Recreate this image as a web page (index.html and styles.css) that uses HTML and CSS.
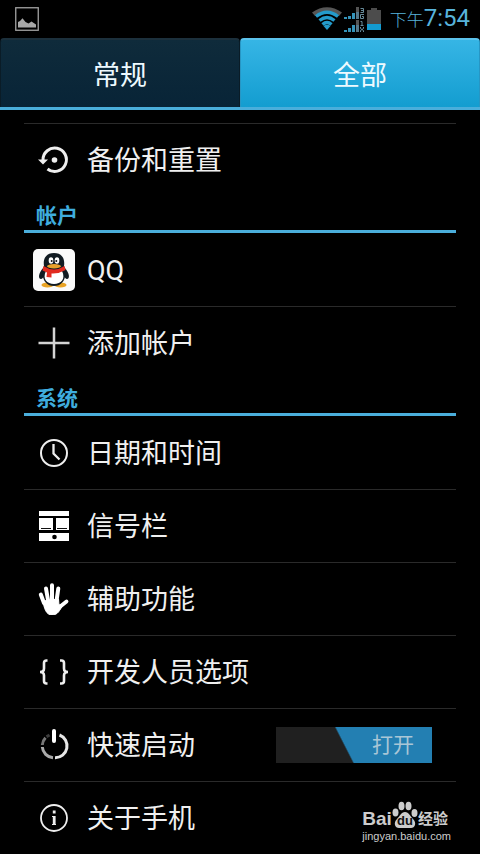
FILE: index.html
```html
<!DOCTYPE html>
<html lang="zh-CN">

<head>
  <meta charset="UTF-8">
  <meta name="viewport" content="width=device-width, initial-scale=1.0">
  <title>设置</title>
  <link rel="stylesheet" href="styles.css">
</head>

<body>
  <header class="status-bar">
    <svg class="status-picture" viewBox="0 0 24 24" width="24" height="24">
      <rect x=".75" y=".75" width="22.5" height="22.5" fill="none" stroke="#a2a2a2" stroke-width="1.3" />
      <path d="M3 20.500v-5.500l2-1 2.500-2.700 3 3.700 3 1.500 3-2 4.500 3v3z" fill="#a8a8a8" />
    </svg>
    <div class="status-right">
      <svg viewBox="0 0 30 24" width="30" height="24">
        <path d="M0 5.500Q15-5 30 5.500L27 9Q15 0 3 9z" fill="#565656" />
        <g fill="none" stroke="#249bcb" stroke-width="3.300">
          <path d="M4 9.500Q15 1 26 9.500" />
          <path d="M7.500 13.500Q15 7.500 22.500 13.500" />
          <path d="M10.500 17.500Q15 13.500 19.500 17.500" />
        </g>
        <path d="M15 23l-3.500-4q3.500-2.500 7 0z" fill="#249bcb" />
      </svg>
      <svg viewBox="0 0 21 25" width="21" height="25">
        <g fill="#3593b9">
          <path d="M0 10h3v2H0zM4 9h3v3H4zM8 6h3v6H8zM0 23h3v2H0zM4 21h3v4H4zM8 18h3v7H8z" />
        </g>
        <path d="M12 0h3v12h-3zM12 13h3v12h-3z" fill="#555" />
        <path d="M12 5h3v7h-3zM12 18h3v7h-3z" fill="#55788a" />
        <g fill="none" stroke="#678b9a">
          <path d="M16.500 1.500h3v4h-3M17 3.500h2M20 7.500h-3.500v4h3v-2h-1.500M16.500 14.500h1.500v4M16.500 18.500h3M16.500 20v1.500l3 2V25M19.500 20v1.500l-3 2V25" />
        </g>
      </svg>
      <svg viewBox="0 0 14 22" width="14" height="22">
        <path d="M4 0h6v2h4v14H0V2h4z" fill="#4c4c4c" />
        <path d="M0 16h14v6H0z" fill="#149bd0" />
      </svg>
      <div class="clock"><span class="clock-period">下午</span><time>7:54</time></div>
    </div>
  </header>

  <nav class="tabs">
    <button class="tab" type="button">常规</button>
    <button class="tab tab-active" type="button">全部</button>
  </nav>

  <main class="settings">
    <ul class="list list-continued">
      <li>
        <a class="row" href="#backup">
          <span class="icon">
            <svg viewBox="0 0 32 32" width="32" height="32">
              <path d="M5 16A11.700 11.700 0 1 1 9.500 25" fill="none" stroke="#eee" stroke-width="3" />
              <path d="M0 15.500h10L5 20.500z" fill="#eee" />
              <circle cx="16.500" cy="16" r="2.800" fill="#eee" />
            </svg>
          </span>
          <span class="label">备份和重置</span>
        </a>
      </li>
    </ul>

    <h2 class="section-title">帐户</h2>
    <ul class="list">
      <li>
        <a class="row" href="#qq">
          <span class="icon">
            <svg viewBox="0 0 42 42" width="42" height="42">
              <rect width="42" height="42" rx="5" fill="#fafafa" />
              <ellipse cx="14.500" cy="36" rx="6" ry="2.600" fill="#e9a324" />
              <ellipse cx="27.500" cy="36" rx="6" ry="2.600" fill="#e9a324" />
              <path d="M11 18C5 24 5 30 8 30q2 0 3-4M31 18c6 6 6 12 3 12q-2 0-3-4" fill="#111b22" />
              <path d="M21 4C12 4 10 11 11 17 7 28 12 37 21 37S35 28 31 17C32 11 30 4 21 4z" fill="#111b22" />
              <path d="M13 22q8 4 16 0c4 8-1 13-8 13s-12-5-8-13z" fill="#fff" />
              <ellipse cx="18" cy="11.500" rx="2.300" ry="3.200" fill="#fff" />
              <ellipse cx="24" cy="11.500" rx="2.300" ry="3.200" fill="#fff" />
              <circle cx="18.700" cy="12" r="1" fill="#111" />
              <circle cx="23.300" cy="12" r="1" fill="#111" />
              <path d="M10.500 17q10.500 7 21 0l1 4q-7 4-14 3.500v4l-5-.5.500-4.500-4.500-2z" fill="#e22b20" />
              <ellipse cx="21" cy="17.300" rx="7" ry="2.200" fill="#e8a12a" />
            </svg>
          </span>
          <span class="label">QQ</span>
        </a>
      </li>
      <li>
        <a class="row" href="#add-account">
          <span class="icon">
            <svg viewBox="0 0 32 32" width="32" height="32">
              <path d="M16 .5v31M.5 16h31" stroke="#d4d4d4" stroke-width="2.500" />
            </svg>
          </span>
          <span class="label">添加帐户</span>
        </a>
      </li>
    </ul>

    <h2 class="section-title">系统</h2>
    <ul class="list">
      <li>
        <a class="row" href="#date">
          <span class="icon">
            <svg viewBox="0 0 32 32" width="32" height="32" fill="none" stroke="#eee">
              <circle cx="16" cy="16" r="13" stroke-width="2" />
              <path d="M15.500 7v9.500l6 6" stroke-width="2.300" />
            </svg>
          </span>
          <span class="label">日期和时间</span>
        </a>
      </li>
      <li>
        <a class="row" href="#signal-bar">
          <span class="icon">
            <svg viewBox="0 0 32 32" width="32" height="32">
              <path d="M1 1h30v5H1zM1 8h14v12H1zM18 8h13v12H18zM1 23h30v8H1z" fill="#fff" />
              <path d="M3 18.500h10M19 18.500h10" stroke="#111" stroke-width="1.200" />
              <circle cx="16.500" cy="27" r="2.300" fill="#000" />
            </svg>
          </span>
          <span class="label">信号栏</span>
        </a>
      </li>
      <li>
        <a class="row" href="#accessibility">
          <span class="icon">
            <svg viewBox="0 0 32 32" width="32" height="32" stroke="#fff" stroke-linecap="round" stroke-linejoin="round">
              <path d="M2.800 11.500L6 20M8 5.500L10.200 18M14 2.300V18M20.300 5.500L18.500 18" fill="none" stroke-width="4" />
              <path d="M28.500 18.500L21 24.500" fill="none" stroke-width="3.800" />
              <path d="M5 18l15.500-2 .5 6 4.500-1c-4 6.500-5.500 11-11.500 11C8 32 6 25 5 18z" fill="#fff" stroke-width="1" />
            </svg>
          </span>
          <span class="label">辅助功能</span>
        </a>
      </li>
      <li>
        <a class="row" href="#developer">
          <span class="icon">
            <svg viewBox="0 0 32 32" width="32" height="32" fill="none" stroke="#eee" stroke-width="2.600">
              <path d="M9.500 4.500H8.500Q6 4.500 6 7v5.500q0 3.500-4 3.500 4 0 4 3.500V25q0 2.500 2.500 2.500h1" />
              <path d="M22 4.500H23.500q2.500 0 2.500 2.500v5.500q0 3.500 4 3.500-4 0-4 3.500V25q0 2.500-2.500 2.500h-1.500" />
            </svg>
          </span>
          <span class="label">开发人员选项</span>
        </a>
      </li>
      <li>
        <div class="row">
          <span class="icon">
            <svg viewBox="0 0 32 32" width="32" height="32" fill="none" stroke-width="3">
              <path d="M21.500 6A11.800 11.800 0 0 1 17 28.800" stroke="#e6e6e6" />
              <path d="M15 28.800A11.800 11.800 0 0 1 4.300 18" stroke="#aaa" />
              <path d="M4.300 16A11.800 11.800 0 0 1 7.500 8.800" stroke="#777" />
              <path d="M8.500 7.800L11.500 6" stroke="#3c3c3c" />
              <path d="M16 2v10" stroke="#fff" stroke-width="4" stroke-linecap="round" />
            </svg>
          </span>
          <label class="label" for="fast-boot">快速启动</label>
          <span class="switch">
            <input class="switch-input" id="fast-boot" type="checkbox" checked>
            <span class="switch-text">打开</span>
          </span>
        </div>
      </li>
      <li>
        <a class="row" href="#about">
          <span class="icon">
            <svg viewBox="0 0 32 32" width="32" height="32" fill="none" stroke="#eee">
              <circle cx="16" cy="16" r="13" stroke-width="1.800" />
              <path d="M14 14.500h2M14 22.500h4" stroke-width="1.200" />
              <path d="M16.200 8.500v3M16.200 14v9" stroke-width="2.800" />
            </svg>
          </span>
          <span class="label">关于手机</span>
        </a>
      </li>
    </ul>
  </main>

  <div class="watermark">
    <div class="watermark-logo">
      <span class="watermark-bai">Bai</span>
      <span class="paw">
        <svg viewBox="0 0 26 28" width="26" height="28" fill="#ccc">
          <ellipse cx="3.500" cy="11.500" rx="3" ry="4" />
          <ellipse cx="9.500" cy="5" rx="3" ry="4.300" />
          <ellipse cx="16.500" cy="5" rx="3" ry="4.300" />
          <ellipse cx="22.500" cy="12" rx="3" ry="4" />
          <path d="M13 11c4 0 5 4 8 7 4 4 2 9-2 9H7c-4 0-6-5-2-9 3-3 4-7 8-7z" />
        </svg>
        <span class="paw-text">du</span>
      </span>
      <span class="watermark-cn">经验</span>
    </div>
    <div class="watermark-url">jingyan.baidu.com</div>
  </div>
</body>

</html>
```

FILE: styles.css
```css
* {
  margin: 0;
  padding: 0;
  box-sizing: border-box;
}

body {
  position: relative;
  min-height: 100vh;
  background: #000;
  color: #f0f0f0;
  font-family: Roboto, "Noto Sans CJK SC", sans-serif;
}

svg {
  display: block;
  flex: none;
}

/* status bar */
.status-bar {
  display: flex;
  align-items: center;
  justify-content: space-between;
  height: 38px;
  padding: 0 10px 0 15px;
}

.status-right {
  display: flex;
  align-items: center;
  gap: 2px;
}

.clock {
  display: flex;
  align-items: baseline;
  margin-left: 7px;
  color: #58b4dc;
  font-size: 24px;
  line-height: 38px;
}

.clock-period {
  font-size: 17px;
  font-weight: 300;
}

/* tabs */
.tabs {
  display: flex;
  height: 72px;
  border-bottom: 3px solid #4aaedb;
}

.tab {
  flex: 1;
  border: 1px solid #0a1c27;
  border-top: 2px solid #1c303c;
  border-bottom: none;
  border-radius: 4px 4px 0 0;
  background: linear-gradient(#0f2b3b, #082437);
  color: #eefaff;
  font-family: inherit;
  font-size: 27px;
  cursor: pointer;
}

.tab-active {
  border-color: #2796c4;
  border-top-color: #5cc3ec;
  background: linear-gradient(#36b5e5, #139dd0);
}

/* settings list */
.settings {
  padding: 13px 24px 0;
}

.list {
  list-style: none;
}

.row {
  display: flex;
  align-items: center;
  height: 73px;
  padding-right: 24px;
  border-top: 1px solid #2a2a2a;
  color: inherit;
  text-decoration: none;
}

.list li:first-child .row {
  border-top-color: transparent;
}

.list-continued li:first-child .row {
  border-top-color: #2a2a2a;
}

.icon {
  display: flex;
  justify-content: center;
  width: 60px;
  margin-right: 3px;
}

.label {
  flex: 1;
  padding-top: 2px;
  font-size: 27px;
  line-height: 36px;
}

.section-title {
  height: 37px;
  padding: 4px 0 0 12px;
  border-bottom: 3px solid #4aaedb;
  color: #3fadde;
  font-size: 21px;
  line-height: 32px;
}

/* switch */
.switch {
  display: grid;
  width: 156px;
  height: 36px;
}

.switch-input,
.switch-text {
  grid-area: 1 / 1;
}

.switch-input {
  appearance: none;
  background: #202020;
  cursor: pointer;
}

.switch-input:checked {
  background: linear-gradient(63deg, #202020 44%, #237fb2 45%);
}

.switch-text {
  justify-self: end;
  padding-right: 18px;
  color: #a9c6d6;
  font-size: 21px;
  line-height: 36px;
  pointer-events: none;
}

/* watermark */
.watermark {
  position: absolute;
  right: 29px;
  bottom: 10px;
  color: #ccc;
  font-family: "Liberation Sans", "Noto Sans CJK SC", sans-serif;
  pointer-events: none;
}

.watermark-logo {
  display: flex;
  align-items: flex-end;
  font-weight: bold;
  line-height: 20px;
}

.watermark-bai {
  font-size: 19px;
}

.paw {
  display: grid;
  place-items: end center;
}

.paw svg,
.paw-text {
  grid-area: 1 / 1;
}

.paw-text {
  color: #111;
  font-size: 13px;
  line-height: 16px;
}

.watermark-cn {
  font-size: 15px;
}

.watermark-url {
  font-size: 11px;
  line-height: 15px;
}
```
